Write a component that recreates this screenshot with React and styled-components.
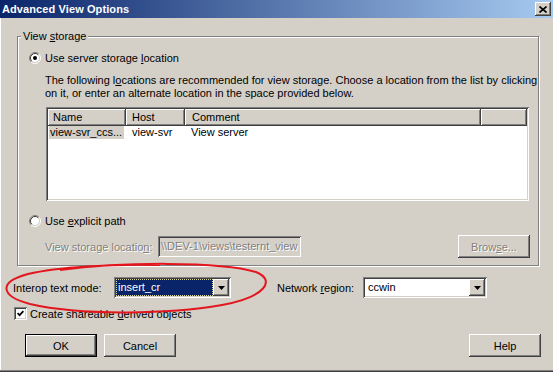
import React from 'react';
import styled, { createGlobalStyle } from 'styled-components';

const Global = createGlobalStyle`
  html, body { margin: 0; padding: 0; background: #d4d0c8; }
  body { font-family: "Liberation Sans", Arial, sans-serif; font-size: 11px; color: #000; }
  #root { width: 553px; height: 372px; overflow: hidden; }
`;

const raised = `
  box-shadow: inset -1px -1px #404040, inset 1px 1px #ffffff, inset -2px -2px #808080, inset 2px 2px #d4d0c8;
`;
const sunken = `
  box-shadow: inset 1px 1px #808080, inset -1px -1px #ffffff, inset 2px 2px #404040, inset -2px -2px #d4d0c8;
`;

const Window = styled.div`
  position: relative;
  width: 553px;
  height: 372px;
  box-sizing: border-box;
  background: #d4d0c8;
  display: flex;
  flex-direction: column;
  box-shadow: inset 0 -1px #404040, inset 0 -2px #808080, inset 1px 0 #ffffff;
`;

const TitleBar = styled.div`
  height: 18px;
  flex: none;
  display: flex;
  align-items: center;
  justify-content: space-between;
  padding: 0 2px;
  background: linear-gradient(to right, #0a246a, #a6caf0);
`;

const TitleText = styled.span`
  color: #fff;
  font-weight: bold;
  font-size: 11px;
  line-height: 13px;
  letter-spacing: 0.1px;
`;

const CaptionButton = styled.div`
  width: 16px;
  height: 14px;
  background: #d4d0c8;
  ${raised}
  display: flex;
  align-items: center;
  justify-content: center;
`;

const Body = styled.div`
  display: flex;
  flex-direction: column;
  padding-top: 12px;
`;

const Group = styled.fieldset`
  margin: 0 14px 0 17px;
  padding: 0 8px 7px 0;
  min-width: 0;
  border: 1px solid #808080;
  box-shadow: inset 1px 1px #ffffff, 1px 1px #ffffff;
`;

const Legend = styled.legend`
  margin-left: 3px;
  padding: 0 2px;
  line-height: 13px;
  background: #d4d0c8;
`;

const U = styled.span`
  text-decoration: underline;
  text-underline-offset: 1px;
`;

const OptionRow = styled.div`
  display: flex;
  align-items: center;
  gap: 4px;
  height: 17px;
  margin-top: ${p => p.$top}px;
  padding-left: 11px;
`;

const Description = styled.div`
  margin: 8px 0 0 27px;
  line-height: 13px;
  white-space: nowrap;
`;

const List = styled.div`
  margin: 7px 0 0 28px;
  width: 483px;
  height: 94px;
  box-sizing: border-box;
  padding: 2px;
  background: #fff;
  ${sunken}
  display: flex;
  flex-direction: column;
`;

const HeaderRow = styled.div`
  display: flex;
  height: 17px;
  flex: none;
`;

const HeaderCell = styled.div`
  ${p => (p.$w ? `width: ${p.$w}px; flex: none;` : 'flex: 1;')}
  box-sizing: border-box;
  padding-left: ${p => p.$pad}px;
  line-height: 17px;
  background: #d4d0c8;
  ${raised}
  white-space: nowrap;
  overflow: hidden;
`;

const DataRow = styled.div`
  display: flex;
  height: 13px;
  line-height: 13px;
  white-space: nowrap;
`;

const DataCell = styled.div`
  width: ${p => p.$w}px;
  flex: none;
  box-sizing: border-box;
  padding-left: ${p => p.$pad}px;
  overflow: hidden;
`;

const Selected = styled.span`
  display: inline-block;
  background: #d4d0c8;
  padding: 0 2px 0 1px;
  margin-left: 1px;
`;

const LocationRow = styled.div`
  display: flex;
  align-items: center;
  height: 23px;
  margin: 6px 0 0 27px;
`;

const Disabled = styled.span`
  color: #808080;
  text-shadow: 1px 1px #ffffff;
`;

const LocLabel = styled(Disabled)`
  width: 113px;
  flex: none;
  white-space: nowrap;
`;

const DisabledField = styled.div`
  width: 143px;
  height: 21px;
  box-sizing: border-box;
  padding: 2px 2px 2px 3px;
  line-height: 17px;
  background: #d4d0c8;
  ${sunken}
  white-space: nowrap;
  overflow: hidden;
  color: #808080;
  text-shadow: 1px 1px #ffffff;
`;

const Button = styled.div`
  width: 72px;
  height: 23px;
  flex: none;
  box-sizing: border-box;
  display: flex;
  align-items: center;
  justify-content: center;
  background: #d4d0c8;
  ${p =>
    p.$default
      ? `border: 1px solid #000; box-shadow: inset -1px -1px #404040, inset 1px 1px #ffffff, inset -2px -2px #808080;`
      : raised}
  margin-left: ${p => (p.$push ? 'auto' : '0')};
  color: ${p => (p.$disabled ? '#808080' : '#000')};
  text-shadow: ${p => (p.$disabled ? '1px 1px #ffffff' : 'none')};
`;

const FormRow = styled.div`
  display: flex;
  align-items: center;
  height: 21px;
  margin-top: 11px;
  padding-left: 13px;
`;

const FieldLabel = styled.span`
  width: ${p => p.$w}px;
  flex: none;
  white-space: nowrap;
`;

const Combo = styled.div`
  width: ${p => p.$w}px;
  height: 21px;
  flex: none;
  box-sizing: border-box;
  padding: 2px;
  background: #fff;
  ${sunken}
  display: flex;
`;

const ComboText = styled.div`
  flex: 1;
  box-sizing: border-box;
  line-height: 15px;
  padding-left: ${p => (p.$sel ? 1 : 2)}px;
  white-space: nowrap;
  overflow: hidden;
  ${p =>
    p.$sel
      ? `background: #0a246a; color: #fff; border: 1px dotted #d8d4a0;`
      : `border: 1px solid transparent;`}
`;

const ComboButton = styled.div`
  width: 16px;
  flex: none;
  background: #d4d0c8;
  ${raised}
  display: flex;
  align-items: center;
  justify-content: center;
`;

const CheckRow = styled.div`
  display: flex;
  align-items: center;
  gap: 3px;
  height: 17px;
  margin-top: 7px;
  padding-left: 14px;
`;

const CheckBox = styled.div`
  width: 13px;
  height: 13px;
  box-sizing: border-box;
  background: #fff;
  ${sunken}
  display: flex;
  align-items: center;
  justify-content: center;
`;

const ButtonRow = styled.div`
  display: flex;
  gap: 7px;
  margin-top: 12px;
  padding: 0 12px 0 25px;
`;

const Annotation = styled.svg`
  position: absolute;
  left: 0;
  top: 0;
  pointer-events: none;
`;

const Radio = ({ checked }) => (
  <svg width="12" height="12" viewBox="0 0 12 12" style={{ flex: 'none' }}>
    <circle cx="6" cy="6" r="4.5" fill="#fff" />
    <path d="M2.11 9.89 A5.5 5.5 0 0 1 9.89 2.11" fill="none" stroke="#808080" strokeWidth="1" />
    <path d="M9.89 2.11 A5.5 5.5 0 0 1 2.11 9.89" fill="none" stroke="#ffffff" strokeWidth="1" />
    <path d="M2.82 9.18 A4.5 4.5 0 0 1 9.18 2.82" fill="none" stroke="#404040" strokeWidth="1" />
    <path d="M9.18 2.82 A4.5 4.5 0 0 1 2.82 9.18" fill="none" stroke="#d4d0c8" strokeWidth="1" />
    {checked && <circle cx="6" cy="6" r="2" fill="#000" />}
  </svg>
);

const Arrow = () => (
  <svg width="7" height="4" viewBox="0 0 7 4">
    <polygon points="0,0 7,0 3.5,4" fill="#000" />
  </svg>
);

const CloseGlyph = () => (
  <svg width="8" height="7" viewBox="0 0 8 7">
    <path d="M0.5 0.5 L7.5 6.5 M7.5 0.5 L0.5 6.5" stroke="#000" strokeWidth="1.6" />
  </svg>
);

const CheckMark = () => (
  <svg width="7" height="7" viewBox="0 0 7 7">
    <path d="M0.6 3.2 L2.6 5.2 L6.4 1.2" fill="none" stroke="#000" strokeWidth="1.7" />
  </svg>
);

export default function App() {
  return (
    <>
      <Global />
      <Window>
        <TitleBar>
          <TitleText>Advanced View Options</TitleText>
          <CaptionButton>
            <CloseGlyph />
          </CaptionButton>
        </TitleBar>
        <Body>
          <Group>
            <Legend>
              View <U>s</U>torage
            </Legend>
            <OptionRow $top={6}>
              <Radio checked />
              <span>
                Use server storage <U>l</U>ocation
              </span>
            </OptionRow>
            <Description>
              The following l<U>o</U>cations are recommended for view storage. Choose a location from the list by clicking
              <br />
              on it, or enter an alternate location in the space provided below.
            </Description>
            <List>
              <HeaderRow>
                <HeaderCell $w={78} $pad={5}>Name</HeaderCell>
                <HeaderCell $w={59} $pad={6}>Host</HeaderCell>
                <HeaderCell $w={296} $pad={7}>Comment</HeaderCell>
                <HeaderCell $pad={6} />
              </HeaderRow>
              <DataRow>
                <DataCell $w={78} $pad={0}>
                  <Selected>view-svr_ccs...</Selected>
                </DataCell>
                <DataCell $w={59} $pad={6}>view-svr</DataCell>
                <DataCell $w={296} $pad={6}>View server</DataCell>
              </DataRow>
            </List>
            <OptionRow $top={11}>
              <Radio />
              <span>
                Use <U>e</U>xplicit path
              </span>
            </OptionRow>
            <LocationRow>
              <LocLabel>
                View storage locatio<U>n</U>:
              </LocLabel>
              <DisabledField>\\DEV-1\views\testernt_view</DisabledField>
              <Button $push $disabled>
                Brow<U>s</U>e...
              </Button>
            </LocationRow>
          </Group>
          <FormRow>
            <FieldLabel $w={101}>Interop text mode:</FieldLabel>
            <Combo $w={117}>
              <ComboText $sel>insert_cr</ComboText>
              <ComboButton>
                <Arrow />
              </ComboButton>
            </Combo>
            <FieldLabel $w={46} />
            <FieldLabel $w={86}>
              Network <U>r</U>egion:
            </FieldLabel>
            <Combo $w={124}>
              <ComboText>ccwin</ComboText>
              <ComboButton>
                <Arrow />
              </ComboButton>
            </Combo>
          </FormRow>
          <CheckRow>
            <CheckBox>
              <CheckMark />
            </CheckBox>
            <span>
              Create shareable <U>d</U>erived objects
            </span>
          </CheckRow>
          <ButtonRow>
            <Button $default>OK</Button>
            <Button>Cancel</Button>
            <Button $push>Help</Button>
          </ButtonRow>
        </Body>
        <Annotation width="553" height="372" viewBox="0 0 553 372">
          <path
            d="M60 270 C120 262 220 261 256 272 C276 280 266 297 222 305 C170 314 82 316 30 304 C0 296 -2 282 28 274 C58 267 110 264 160 265"
            fill="none"
            stroke="#e3161e"
            strokeWidth="2"
          />
        </Annotation>
      </Window>
    </>
  );
}
